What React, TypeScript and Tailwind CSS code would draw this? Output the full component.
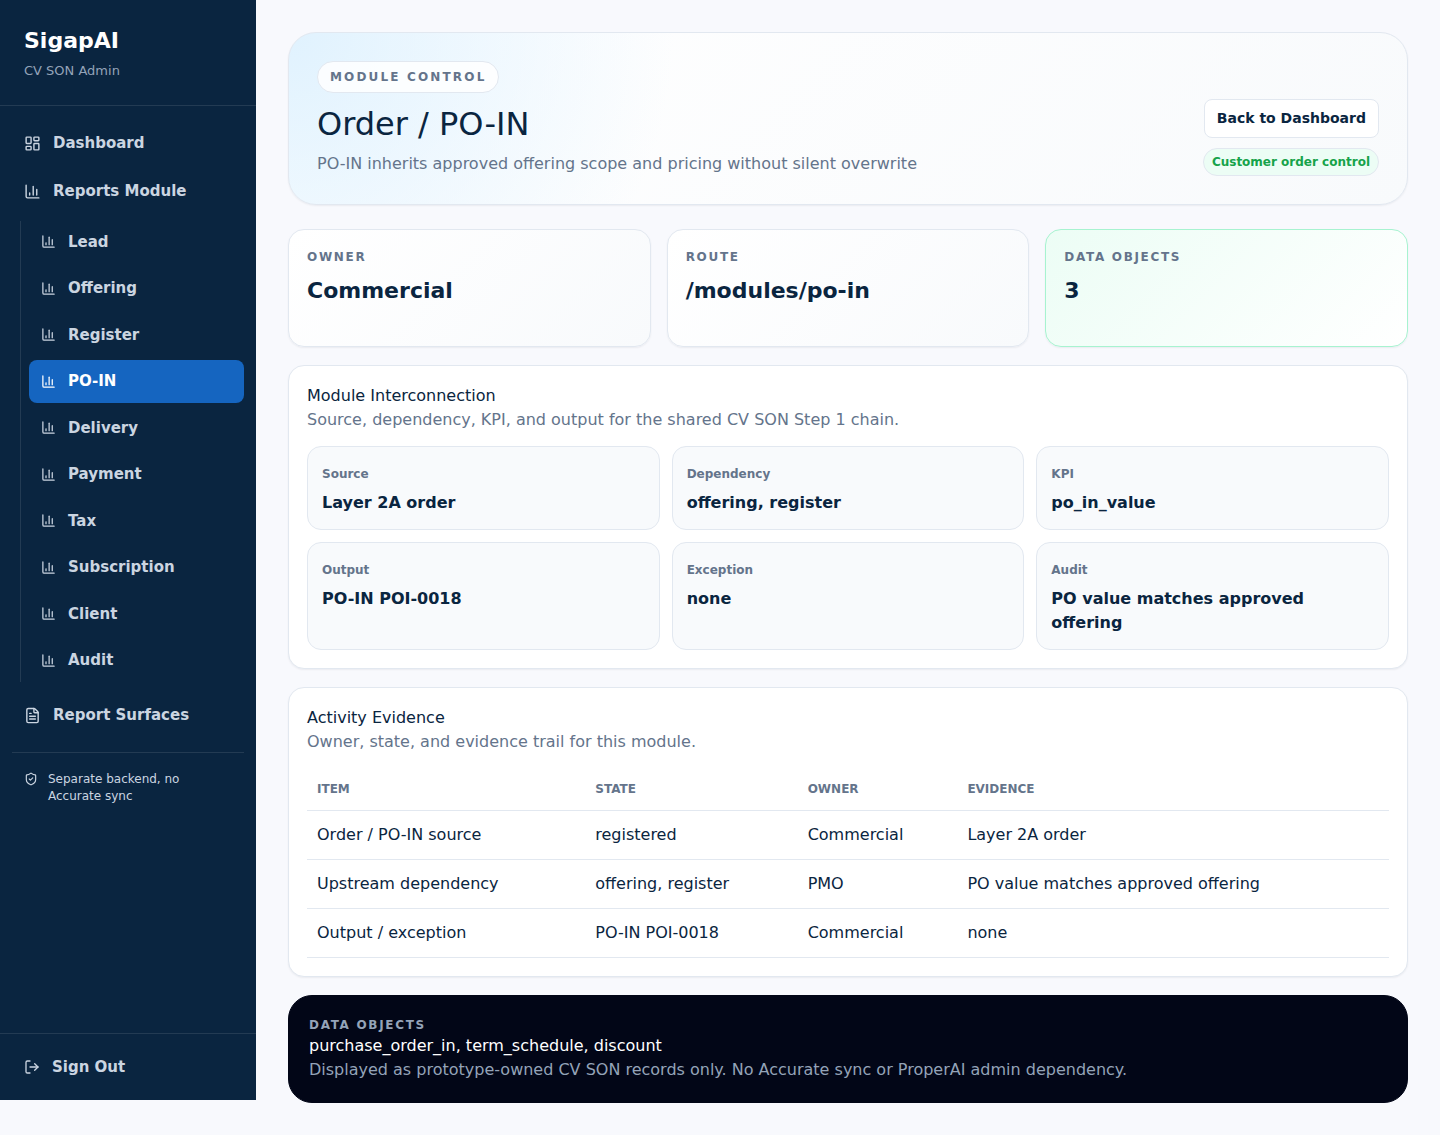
import React, { useState } from 'react';
import { ChartColumn, FileText, LayoutDashboard, LogOut, ShieldCheck } from 'lucide-react';

interface Stat {
  label: string;
  value: string;
  highlight?: boolean;
}

const REPORT_MODULES = [
  'Lead',
  'Offering',
  'Register',
  'PO-IN',
  'Delivery',
  'Payment',
  'Tax',
  'Subscription',
  'Client',
  'Audit',
];

const STATS: Stat[] = [
  { label: 'Owner', value: 'Commercial' },
  { label: 'Route', value: '/modules/po-in' },
  { label: 'Data Objects', value: '3', highlight: true },
];

const CONNECTIONS = [
  { label: 'Source', value: 'Layer 2A order' },
  { label: 'Dependency', value: 'offering, register' },
  { label: 'KPI', value: 'po_in_value' },
  { label: 'Output', value: 'PO-IN POI-0018' },
  { label: 'Exception', value: 'none' },
  { label: 'Audit', value: 'PO value matches approved offering' },
];

const EVIDENCE = [
  ['Order / PO-IN source', 'registered', 'Commercial', 'Layer 2A order'],
  ['Upstream dependency', 'offering, register', 'PMO', 'PO value matches approved offering'],
  ['Output / exception', 'PO-IN POI-0018', 'Commercial', 'none'],
];

const navItem = 'flex h-11 items-center gap-3 rounded-lg px-3 text-[15px] font-semibold text-[#cbd5e1] hover:bg-white/5';

const Sidebar = () => {
  const [active, setActive] = useState<string>('PO-IN');

  return (
    <aside className="mb-[35px] flex w-64 shrink-0 flex-col bg-[#0a2540]">
      <div className="border-b border-white/10 p-6">
        <p className="text-[22px] leading-[33px] font-bold text-white">SigapAI</p>
        <p className="mt-1 text-[13px] leading-normal text-[#94a3b8]">CV SON Admin</p>
      </div>

      <nav className="flex-1 px-3 pt-4">
        <a href="#dashboard" className={navItem}>
          <LayoutDashboard size={17} />
          Dashboard
        </a>
        <a href="#reports" className={`${navItem} mt-1`}>
          <ChartColumn size={17} />
          Reports Module
        </a>
        <ul className="mt-[7px] ml-2 flex flex-col gap-1 border-l border-white/10 pl-2">
          {REPORT_MODULES.map((name) => (
            <li key={name}>
              <a
                href={`#${name.toLowerCase()}`}
                onClick={() => setActive(name)}
                className={`flex items-center gap-3 rounded-lg px-3 py-[10px] text-[15px] leading-normal font-semibold ${active === name ? 'bg-[#1565c0] text-white' : 'text-[#cbd5e1] hover:bg-white/5'}`}
              >
                <ChartColumn size={15} />
                {name}
              </a>
            </li>
          ))}
        </ul>
        <a href="#surfaces" className={`${navItem} mt-3`}>
          <FileText size={17} />
          Report Surfaces
        </a>
        <div className="mt-[14px] flex gap-[10px] border-t border-white/10 px-3 pt-[18px] text-xs leading-[17px] text-[#cbd5e1]">
          <ShieldCheck size={14} className="mt-px shrink-0" />
          <span>Separate backend, no Accurate sync</span>
        </div>
      </nav>

      <div className="border-t border-white/10 p-3">
        <button className="flex w-full cursor-pointer items-center gap-3 rounded-lg px-3 py-[10px] text-[15px] leading-normal font-semibold text-[#cbd5e1] hover:bg-white/5">
          <LogOut size={16} />
          Sign Out
        </button>
      </div>
    </aside>
  );
};

const Panel = ({ title, subtitle, children }: { title: string; subtitle: string; children: React.ReactNode }) => (
  <section className="mt-[18px] rounded-2xl border border-[#e2e8f0] bg-white p-[18px] shadow-[0_1px_2px_rgba(15,23,42,0.06)]">
    <h2>{title}</h2>
    <p className="text-[#64748b]">{subtitle}</p>
    <div className="mt-[14px]">{children}</div>
  </section>
);

const App: React.FC = () => {
  return (
    <div className="flex min-h-screen bg-[#f8f9fd] font-['DejaVu_Sans',sans-serif] text-base text-[#0a2540]">
      <Sidebar />

      <main className="min-w-0 flex-1 p-8">
        <header className="flex items-end justify-between gap-6 rounded-[28px] border border-[#e2e8f0] bg-[radial-gradient(circle_at_top_left,#e0f2fe,transparent_34%),linear-gradient(135deg,#ffffff,#f8fafc)] p-7 shadow-[0_1px_2px_rgba(15,23,42,0.06)]">
          <div>
            <span className="inline-flex h-8 items-center rounded-full border border-[#e2e8f0] bg-white/85 px-3 align-top text-xs font-bold tracking-[0.18em] text-[#64748b] uppercase">
              Module Control
            </span>
            <h1 className="mt-[13px] text-[32px] leading-9">Order / PO-IN</h1>
            <p className="mt-[10px] text-[#64748b]">PO-IN inherits approved offering scope and pricing without silent overwrite</p>
          </div>
          <div className="flex shrink-0 flex-col items-end gap-[10px]">
            <a href="#dashboard" className="rounded-lg border border-[#e2e8f0] bg-white px-3 py-2 text-sm leading-[21px] font-bold">
              Back to Dashboard
            </a>
            <span className="rounded-full border border-[#e2e8f0] bg-[#ecfdf5] px-2 py-1 text-xs leading-[18px] font-bold text-[#16a34a]">
              Customer order control
            </span>
          </div>
        </header>

        <div className="mt-6 grid grid-cols-3 gap-4">
          {STATS.map((stat) => (
            <article
              key={stat.label}
              className={`min-h-[118px] rounded-2xl border p-[18px] shadow-[0_1px_2px_rgba(15,23,42,0.06)] ${stat.highlight ? 'border-[#a7f3d0] bg-[linear-gradient(135deg,#ecfdf5,#ffffff)]' : 'border-[#e2e8f0] bg-[linear-gradient(135deg,#ffffff,#f8fafc)]'}`}
            >
              <p className="text-xs leading-[18px] font-bold tracking-[0.14em] text-[#64748b] uppercase">{stat.label}</p>
              <p className="mt-2 text-[22px] leading-[33px] font-bold">{stat.value}</p>
            </article>
          ))}
        </div>

        <Panel title="Module Interconnection" subtitle="Source, dependency, KPI, and output for the shared CV SON Step 1 chain.">
          <div className="grid grid-cols-3 gap-3">
            {CONNECTIONS.map((item) => (
              <div key={item.label} className="rounded-[14px] border border-[#e2e8f0] bg-[#f8fafc] p-[14px]">
                <p>
                  <span className="text-xs font-bold text-[#64748b]">{item.label}</span>
                </p>
                <p className="mt-[6px] font-bold">{item.value}</p>
              </div>
            ))}
          </div>
        </Panel>

        <Panel title="Activity Evidence" subtitle="Owner, state, and evidence trail for this module.">
          <table className="w-full text-left">
            <thead>
              <tr className="border-b border-[#e2e8f0] text-xs leading-[18px] text-[#64748b] uppercase">
                {['Item', 'State', 'Owner', 'Evidence'].map((heading) => (
                  <th key={heading} scope="col" className="px-[10px] py-3 font-bold">{heading}</th>
                ))}
              </tr>
            </thead>
            <tbody>
              {EVIDENCE.map((row) => (
                <tr key={row[0]} className="border-b border-[#e2e8f0]">
                  {row.map((cell, index) => (
                    <td key={index} className="px-[10px] py-3">{cell}</td>
                  ))}
                </tr>
              ))}
            </tbody>
          </table>
        </Panel>

        <section className="mt-[18px] rounded-3xl border border-[#020617] bg-[#020617] p-5">
          <p className="text-xs leading-[18px] font-bold tracking-[0.14em] text-[#94a3b8] uppercase">Data Objects</p>
          <p className="text-white">purchase_order_in, term_schedule, discount</p>
          <p className="text-[#94a3b8]">Displayed as prototype-owned CV SON records only. No Accurate sync or ProperAI admin dependency.</p>
        </section>
      </main>
    </div>
  );
};

export default App;
